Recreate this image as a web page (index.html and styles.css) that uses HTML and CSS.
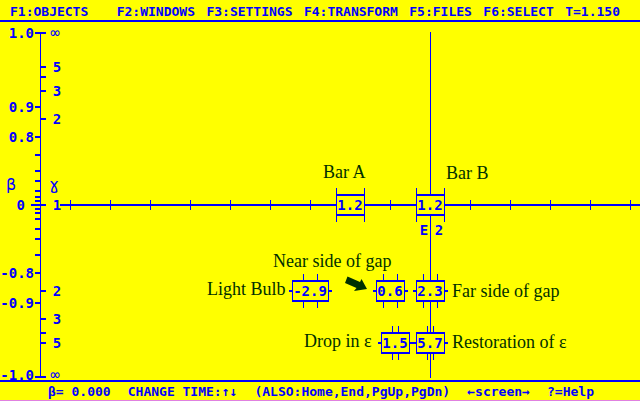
FILE: index.html
```html
<!DOCTYPE html>
<html lang="en">
<head>
<meta charset="utf-8">
<title>Spacetime</title>
<link rel="stylesheet" href="styles.css">
</head>
<body>
<header class="menu">
  <button class="first">F1:OBJECTS</button>
  <button>F2:WINDOWS</button>
  <button>F3:SETTINGS</button>
  <button>F4:TRANSFORM</button>
  <button>F5:FILES</button>
  <button>F6:SELECT</button>
  <span>T=1.150</span>
</header>
<main>
<svg class="plot" viewBox="0 22 640 358" role="img" aria-label="Velocity against position">
  <!-- velocity scale -->
  <path class="thin" d="M40.5 32V378"/>
  <path class="thick" d="M35 33H46M41 67H46M41 77H46M41 91H46M35 107H40M41 119H46M35 137H40M35 155H40M35 171H40M35 181H40M35 191H40M35 197H40M35 201H40M31 205H46M35 209H40M35 213H40M35 219H40M35 229H40M35 239H40M35 255H40M35 273H40M41 291H46M35 303H40M41 319H46M41 333H46M41 343H46M35 377H46"/>
  <g class="digits end">
    <text x="34" y="38">1.0</text>
    <text x="34" y="112">0.9</text>
    <text x="34" y="142">0.8</text>
    <text x="25" y="210">0</text>
    <text x="34" y="278">-0.8</text>
    <text x="34" y="308">-0.9</text>
    <text x="34" y="380">-1.0</text>
  </g>
  <g class="digits">
    <text x="11" y="190" class="greek">β</text>
    <text x="54" y="190" class="greek">ɣ</text>
    <text x="55" y="38" class="greek">∞</text>
    <text x="57" y="72">5</text>
    <text x="57" y="96">3</text>
    <text x="57" y="124">2</text>
    <text x="57" y="210">1</text>
    <text x="57" y="296">2</text>
    <text x="57" y="324">3</text>
    <text x="57" y="348">5</text>
    <text x="55" y="380" class="greek">∞</text>
  </g>

  <!-- position axis and the selected object's worldline -->
  <path class="thick" d="M60 205H640"/>
  <path class="thin" d="M70.5 200v10M110.5 200v10M150.5 200v10M190.5 200v10M230.5 200v10M270.5 200v10M310.5 200v10M390.5 200v10M470.5 200v10M510.5 200v10M550.5 200v10M590.5 200v10M630.5 200v10"/>
  <path class="thin" d="M430.5 32V378"/>

  <!-- bars -->
  <path class="fill" d="M336 194h29v22h-29zM416 194h29v22h-29z"/>
  <path class="thick" d="M336 195h29M336 215h29M416 195h29M416 215h29"/>
  <path class="thin" d="M336.5 188v34M364.5 188v34M416.5 188v34M444.5 188v34"/>

  <!-- events -->
  <path class="fill" d="M292 280h37v22h-37zM376 280h29v22h-29zM416 280h29v22h-29zM381 332h29v22h-29zM416 332h29v22h-29z"/>
  <path class="thick" d="M292 281h37M292 301h37M376 281h29M376 301h29M416 281h29M416 301h29M381 333h29M381 353h29M416 333h29M416 353h29"/>
  <path class="thin" d="M292.5 280v22M328.5 280v22M376.5 280v22M404.5 280v22M416.5 280v22M444.5 280v22M381.5 332v22M409.5 332v22M416.5 332v22M444.5 332v22"/>
  <path class="thick" d="M289 291h3M329 291h3M373 291h3M405 291h3M413 291h3M445 291h3M378 343h3M410 343h6M445 343h3"/>
  <path class="thin" d="M303.5 274v6M317.5 274v6M303.5 302v6M317.5 302v6M383.5 274v6M397.5 274v6M383.5 302v6M397.5 302v6M423.5 274v6M437.5 274v6M423.5 302v6M437.5 302v6M392.5 326v6M398.5 326v6M392.5 354v6M398.5 354v6M427.5 326v6M433.5 326v6M427.5 354v6M433.5 354v6"/>
  <g class="digits">
    <text x="350" y="210">1.2</text>
    <text x="430" y="210">1.2</text>
    <text x="424" y="235">E</text>
    <text x="439" y="235">2</text>
    <text x="310" y="296">-2.9</text>
    <text x="390" y="296">0.6</text>
    <text x="430" y="296">2.3</text>
    <text x="395" y="348">1.5</text>
    <text x="430" y="348">5.7</text>
  </g>

  <!-- annotations -->
  <g class="note">
    <text x="323" y="178">Bar A</text>
    <text x="446" y="179">Bar B</text>
    <text x="273" y="267">Near side of gap</text>
    <text x="207" y="295">Light Bulb</text>
    <text x="452" y="297">Far side of gap</text>
    <text x="304" y="347">Drop in ε</text>
    <text x="452" y="348">Restoration of ε</text>
    <path d="M347.500 276.500L360 282L361.500 279L367 289L354 291L356.500 288L345 283Z"/>
  </g>
</svg>
</main>
<footer class="status">
  <span>β= 0.000</span>
  <span>CHANGE TIME:↑↓</span>
  <span>(ALSO:Home,End,PgUp,PgDn)</span>
  <span>←screen→</span>
  <span>?=Help</span>
</footer>
</body>
</html>
```
FILE: styles.css
```css
:root {
  --ink: #0000ff;
  --paper: #ffff00;
  --note: #003000;
  --mono: "DejaVu Sans Mono", "Liberation Mono", monospace;
}

* {
  box-sizing: border-box;
}

body {
  margin: 0;
  background: var(--paper);
  color: var(--ink);
  font: bold 13px/16px var(--mono);
}

.menu {
  display: flex;
  justify-content: space-between;
  padding: 4px 20px 0 10px;
  border-bottom: 2px solid var(--ink);
  white-space: pre;
}

.menu button {
  padding: 0;
  border: 0;
  background: none;
  color: inherit;
  font: inherit;
}

.menu .first {
  margin-right: 17px;
}

.plot {
  display: block;
  width: 100%;
}

.thin,
.thick {
  fill: none;
  stroke: var(--ink);
  stroke-width: 1px;
  shape-rendering: crispEdges;
}

.thick {
  stroke-width: 2px;
}

.fill {
  fill: var(--paper);
}

.digits {
  fill: var(--ink);
  font-size: 14px;
  text-anchor: middle;
}

.digits.end {
  text-anchor: end;
}

.digits .greek {
  font-size: 16px;
  font-weight: normal;
}

.note {
  fill: var(--note);
  font: 18px "Liberation Serif", serif;
}

.status {
  display: flex;
  justify-content: space-between;
  padding: 2px 46px 0 48px;
  border-top: 2px solid var(--ink);
  border-bottom: 1px solid #e080e0;
  white-space: pre;
}
```
